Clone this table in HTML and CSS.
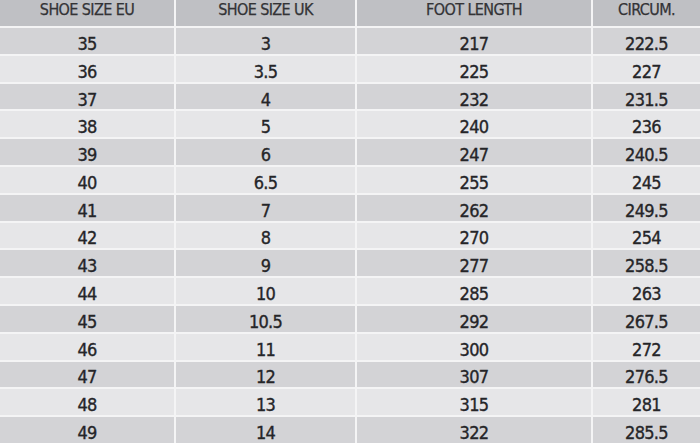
FILE: index.html
```html
<!DOCTYPE html>
<html>
<head>
<meta charset="utf-8">
<link rel="stylesheet" href="styles.css">
</head>
<body>
<div class="chart">
  <div class="cell head">SHOE SIZE EU</div>
  <div class="cell head">SHOE SIZE UK</div>
  <div class="cell head">FOOT LENGTH</div>
  <div class="cell head">CIRCUM.</div>

  <div class="cell odd">35</div><div class="cell odd">3</div><div class="cell odd">217</div><div class="cell odd">222.5</div>
  <div class="cell even">36</div><div class="cell even">3.5</div><div class="cell even">225</div><div class="cell even">227</div>
  <div class="cell odd">37</div><div class="cell odd">4</div><div class="cell odd">232</div><div class="cell odd">231.5</div>
  <div class="cell even">38</div><div class="cell even">5</div><div class="cell even">240</div><div class="cell even">236</div>
  <div class="cell odd">39</div><div class="cell odd">6</div><div class="cell odd">247</div><div class="cell odd">240.5</div>
  <div class="cell even">40</div><div class="cell even">6.5</div><div class="cell even">255</div><div class="cell even">245</div>
  <div class="cell odd">41</div><div class="cell odd">7</div><div class="cell odd">262</div><div class="cell odd">249.5</div>
  <div class="cell even">42</div><div class="cell even">8</div><div class="cell even">270</div><div class="cell even">254</div>
  <div class="cell odd">43</div><div class="cell odd">9</div><div class="cell odd">277</div><div class="cell odd">258.5</div>
  <div class="cell even">44</div><div class="cell even">10</div><div class="cell even">285</div><div class="cell even">263</div>
  <div class="cell odd">45</div><div class="cell odd">10.5</div><div class="cell odd">292</div><div class="cell odd">267.5</div>
  <div class="cell even">46</div><div class="cell even">11</div><div class="cell even">300</div><div class="cell even">272</div>
  <div class="cell odd">47</div><div class="cell odd">12</div><div class="cell odd">307</div><div class="cell odd">276.5</div>
  <div class="cell even">48</div><div class="cell even">13</div><div class="cell even">315</div><div class="cell even">281</div>
  <div class="cell odd">49</div><div class="cell odd">14</div><div class="cell odd">322</div><div class="cell odd">285.5</div>
</div>
</body>
</html>
```
FILE: styles.css
```css
html, body {
  margin: 0;
  padding: 0;
  background: #ffffff;
  overflow: hidden;
}
.chart {
  display: grid;
  grid-template-columns: 174px 179px 234px 107px;
  grid-template-rows: 26px repeat(15, 25.8px);
  column-gap: 2px;
  row-gap: 2px;
  width: 700px;
  background: #f4f4f5;
  font-family: "DejaVu Sans", "Liberation Sans", sans-serif;
  font-stretch: condensed;
  color: #252528;
}
.cell {
  display: flex;
  align-items: center;
  justify-content: center;
  font-size: 18px;
  letter-spacing: -0.7px;
  -webkit-text-stroke: 0.35px #252528;
  padding-top: 5px;
  box-sizing: border-box;
}
.head {
  background: #bfc0c4;
  font-size: 16px;
  letter-spacing: -0.6px;
  -webkit-text-stroke: 0.25px #333336;
  align-items: flex-end;
  padding-top: 0;
  padding-bottom: 7px;
  color: #333336;
}
.odd { background: #d3d3d6; }
.even { background: #e6e6e8; }
```
